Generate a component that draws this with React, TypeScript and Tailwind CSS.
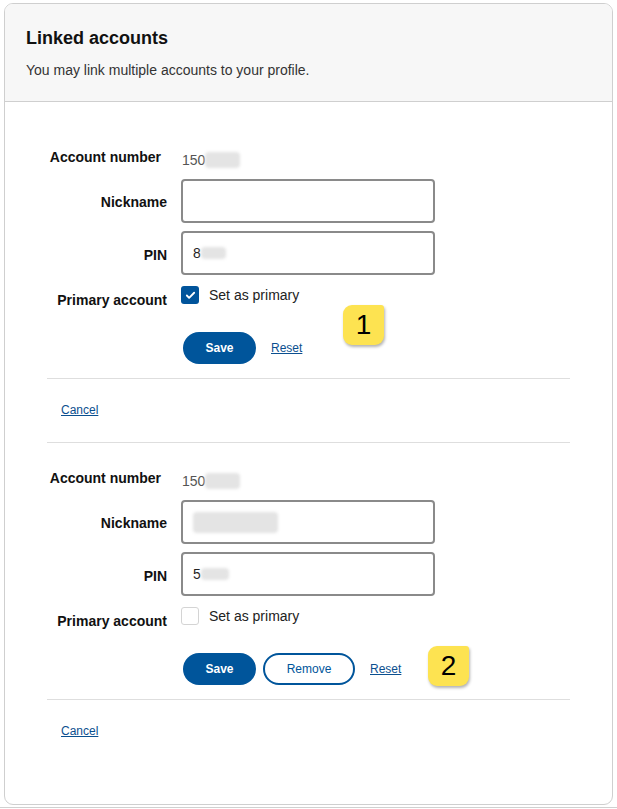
import { Check } from "lucide-react";

const font = { fontFamily: '"Liberation Sans", Arial, sans-serif' };

function Blur({ w, h }: { w: number; h: number }) {
  return (
    <span
      className="inline-block rounded-sm bg-[#e4e4e4] blur-[1.5px] align-middle"
      style={{ width: w, height: h }}
    />
  );
}

function Label({ children, className = "" }: { children: React.ReactNode; className?: string }) {
  return (
    <div className={`w-[120px] shrink-0 text-right text-sm font-bold leading-5 text-[#111] ${className}`}>
      {children}
    </div>
  );
}

interface FormProps {
  nickname?: { w: number; h: number };
  pinDigit: string;
  pinBlur: number;
  primary: boolean;
  removable?: boolean;
  first?: boolean;
}

function AccountForm({ nickname, pinDigit, pinBlur, primary, removable, first }: FormProps) {
  return (
    <div className={first ? "pt-[45px]" : "pt-[25px]"}>
      {/* Account number */}
      <div className="flex gap-[14px]">
        <Label className="pr-[6px]">Account number</Label>
        <div className="mt-[3px] flex items-center pl-[1px] text-sm leading-5 text-[#555]">
          150
          <Blur w={35} h={16} />
        </div>
      </div>

      {/* Nickname */}
      <div className="mt-[9px] flex items-center gap-[14px]">
        <Label className="pt-[2px]">Nickname</Label>
        <div className="flex h-[44px] w-[254px] items-center rounded-[4px] border-2 border-[#8a8a8a] px-[10px]">
          {nickname && <Blur w={nickname.w} h={nickname.h} />}
        </div>
      </div>

      {/* PIN */}
      <div className="mt-[8px] flex items-center gap-[14px]">
        <Label className="pt-[4px]">PIN</Label>
        <div className="flex h-[44px] w-[254px] items-center rounded-[4px] border-2 border-[#8a8a8a] px-[10px] text-sm text-[#222]">
          {pinDigit}
          <Blur w={pinBlur} h={12} />
        </div>
      </div>

      {/* Primary */}
      <div className="mt-[10px] flex items-start gap-[14px]">
        <Label className="mt-[5px]">Primary account</Label>
        <label className="flex items-center gap-[10px] text-sm leading-5 text-[#222]">
          {primary ? (
            <span className="flex h-[18px] w-[18px] items-center justify-center rounded-[3px] bg-[#00549b]">
              <Check className="h-[11px] w-[11px] text-white" strokeWidth={4} />
            </span>
          ) : (
            <span className="h-[18px] w-[18px] rounded-[3px] border border-[#d4d4d4] bg-white" />
          )}
          Set as primary
        </label>
      </div>

      {/* Actions */}
      <div className="mt-[22px] flex items-center pl-[136px]">
        <button
          type="button"
          className="h-8 w-[73px] rounded-full bg-[#00559b] text-xs font-bold text-white"
        >
          Save
        </button>
        {removable && (
          <button
            type="button"
            className="ml-[7px] h-8 w-[92px] rounded-full border-2 border-[#00559b] bg-white text-xs text-[#00559b]"
          >
            Remove
          </button>
        )}
        <a href="#" className="ml-[15px] text-xs text-[#0b4f8f] underline">
          Reset
        </a>
      </div>

      <hr className="mt-[14px] border-t border-[#dedede]" />

      <div className="mt-[23px] pl-[14px] text-xs leading-4">
        <a href="#" className="text-[#0b4f8f] underline">
          Cancel
        </a>
      </div>
    </div>
  );
}

function Badge({ n, className }: { n: string; className: string }) {
  return (
    <div
      className={`absolute flex h-[40px] w-[41px] items-center justify-center rounded-[9px] rounded-tr-[3px] bg-[#fde351] text-[28px] leading-none text-black shadow-[1px_2px_3px_rgba(0,0,0,0.3)] ${className}`}
    >
      {n}
    </div>
  );
}

export default function App() {
  return (
    <div className="relative h-[809px] w-[617px] overflow-hidden bg-white" style={font}>
      <div className="px-[4px] pt-[3px]">
        <div className="h-[802px] w-[609px] overflow-hidden rounded-[9px] border border-[#cfcfcf] bg-white">
          {/* Header */}
          <div className="border-b border-[#cfcfcf] bg-[#f7f7f7] px-[21px] pb-[21px] pt-[22px]">
            <h1 className="text-lg font-bold leading-6 text-[#111]">Linked accounts</h1>
            <p className="mt-[10px] text-sm leading-5 text-[#333]">
              You may link multiple accounts to your profile.
            </p>
          </div>

          <div className="px-[42px]">
            <AccountForm first pinDigit="8" pinBlur={25} primary />
            <hr className="mt-[24px] border-t border-[#dedede]" />
            <AccountForm
              nickname={{ w: 85, h: 21 }}
              pinDigit="5"
              pinBlur={28}
              primary={false}
              removable
            />
          </div>
        </div>
      </div>
      <div className="mt-[2px] border-t border-[#d0d0d0]" />

      <Badge n="1" className="left-[343px] top-[305px]" />
      <Badge n="2" className="left-[428px] top-[646px]" />
    </div>
  );
}
